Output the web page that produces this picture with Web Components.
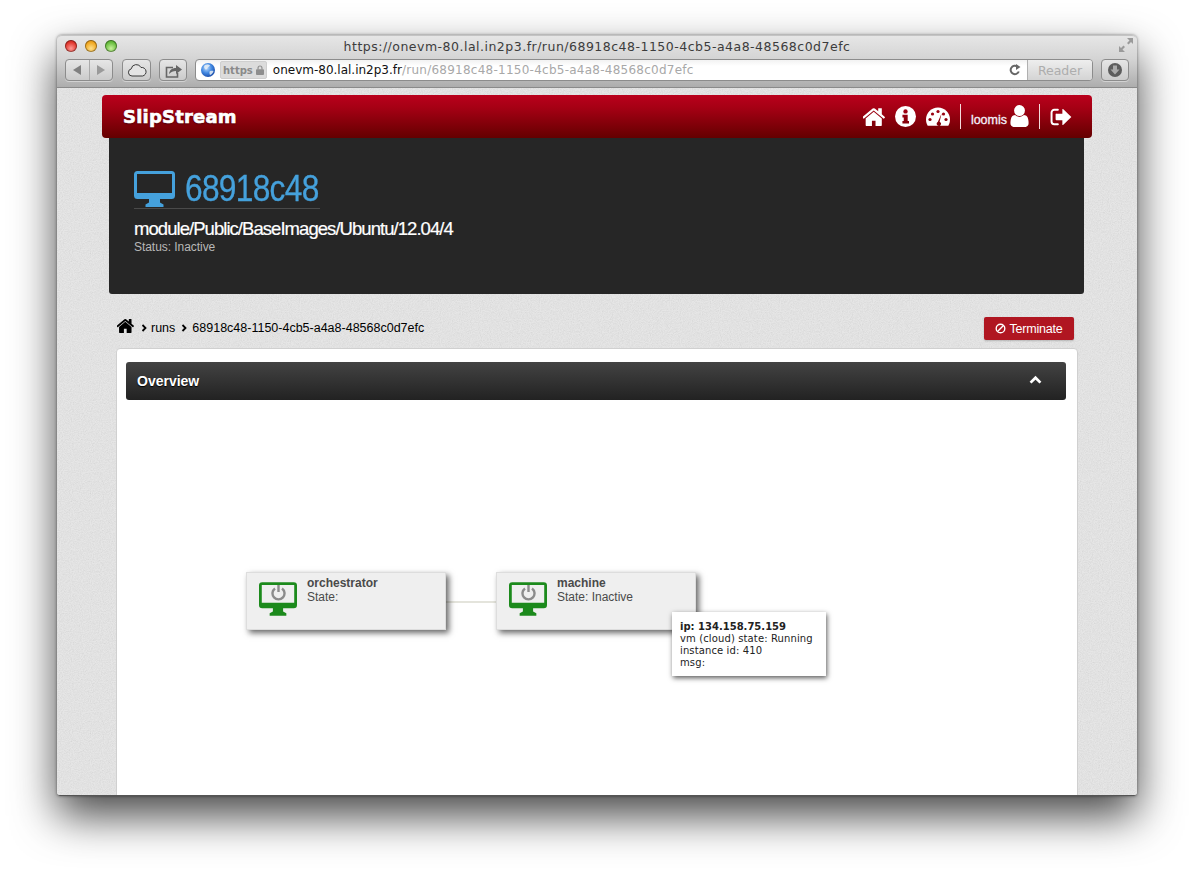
<!DOCTYPE html>
<html>
<head>
<meta charset="utf-8">
<title>SlipStream run</title>
<style>
  html, body { margin: 0; height: 874px; overflow: hidden; background: #fff; }
  body { box-sizing: border-box; padding: 35px 57px 0; font-family: "Liberation Sans", Arial, sans-serif; }
</style>
</head>
<body>
<browser-window>
  <site-nav></site-nav>
  <run-hero name="68918c48" module="module/Public/BaseImages/Ubuntu/12.04/4" status="Status: Inactive"></run-hero>
  <crumb-bar run="68918c48-1150-4cb5-a4a8-48568c0d7efc"></crumb-bar>
  <overview-panel heading="Overview">
    <run-diagram></run-diagram>
  </overview-panel>
</browser-window>

<script>
const ICONS = {
  home: `<svg viewBox="130 180 1570 1340"><path fill="currentColor" d="M1472 992v480q0 26-19 45t-45 19h-384v-384h-256v384h-384q-26 0-45-19t-19-45v-480q0-1 .5-3t.5-3l575-474 575 474q1 2 1 6zm223-69l-62 74q-8 9-21 11h-3q-13 0-21-7l-692-577-692 577q-12 8-24 7-13-2-21-11l-62-74q-8-10-7-23.5t11-21.5l719-599q32-26 76-26t76 26l244 204v-195q0-14 9-23t23-9h192q14 0 23 9t9 23v408l219 182q10 8 11 21.5t-7 23.5z"/></svg>`,
  info: `<svg viewBox="0 0 24 24"><mask id="m"><circle cx="12" cy="12" r="12" fill="#fff"/><circle cx="12" cy="6.200" r="2.500" fill="#000"/><path fill="#000" d="M8.500 10h6v7h1.500v3H8.500v-3H10v-4H8.500z"/></mask><rect width="24" height="24" fill="currentColor" mask="url(#m)"/></svg>`,
  dashboard: `<svg viewBox="0 0 24 19"><mask id="d"><path fill="#fff" d="M12 .500C5.400.500 0 5.900 0 12.500c0 2.300.6 4.400 1.700 6.200h20.600c1.100-1.800 1.700-3.900 1.700-6.200C24 5.900 18.600.500 12 .500z"/><g fill="#000"><circle cx="4" cy="12.500" r="1.600"/><circle cx="6.500" cy="7" r="1.600"/><circle cx="12" cy="4.500" r="1.600"/><circle cx="17.500" cy="7" r="1.600"/><circle cx="20" cy="12.500" r="1.600"/><path d="M15.600 6.500l-2 8.200a2.200 2.200 0 1 1-2.900 2.600c-.2-1 .3-2 1.100-2.400z"/></g></mask><rect width="24" height="19" fill="currentColor" mask="url(#d)"/></svg>`,
  user: `<svg viewBox="250 120 1290 1550"><path fill="currentColor" d="M1536 1399q0 109-62.500 187t-150.500 78h-854q-88 0-150.500-78t-62.500-187q0-85 8.500-160.500t31.500-152 58.500-131 94-89 134.500-34.500q131 128 313 128t313-128q76 0 134.500 34.500t94 89 58.500 131 31.500 152 8.500 160.500zm-256-887q0 159-112.500 271.500t-271.500 112.500-271.500-112.500-112.500-271.500 112.500-271.500 271.500-112.500 271.500 112.500 112.500 271.500z"/></svg>`,
  signout: `<svg viewBox="0 0 24 20"><path fill="none" stroke="currentColor" stroke-width="2.200" stroke-linecap="round" d="M8.500 2H4.500A3 3 0 0 0 1.500 5v10a3 3 0 0 0 3 3h4"/><path fill="currentColor" d="M7 6.500h6.500V1.500a.5.500 0 0 1 .8-.4L23.500 10l-9.200 8.900a.5.500 0 0 1-.8-.4v-5H7a1 1 0 0 1-1-1v-5.500a1 1 0 0 1 1-1z"/></svg>`,
  monitor: `<svg viewBox="0 0 41 36"><path fill="currentColor" fill-rule="evenodd" d="M3.500 0h34A3.500 3.500 0 0 1 41 3.500v21a3.500 3.500 0 0 1-3.500 3.500H26v3.500l3.500 2V36h-18v-2.500l3.500-2V28H3.500A3.500 3.500 0 0 1 0 24.500v-21A3.500 3.500 0 0 1 3.500 0zM3 3v19h35V3z"/></svg>`,
  chevronRight: `<svg viewBox="0 0 8 10"><path fill="none" stroke="currentColor" stroke-width="2.400" d="M2 1l4 4-4 4"/></svg>`,
  chevronUp: `<svg viewBox="0 0 14 10"><path fill="none" stroke="currentColor" stroke-width="3" d="M1.500 8.500L7 3l5.500 5.500"/></svg>`,
  ban: `<svg viewBox="0 0 12 12"><circle cx="6" cy="6" r="4.700" fill="none" stroke="currentColor" stroke-width="1.500"/><path stroke="currentColor" stroke-width="1.500" d="M2.800 9.200l6.400-6.400"/></svg>`,
  cloud: `<svg viewBox="0 0 20 14"><path fill="#e4e4e4" stroke="#3a3a3a" stroke-width="1" d="M5 13a3.600 3.600 0 0 1-.8-7.100A5.200 5.200 0 0 1 14 4.500a4.300 4.300 0 0 1 1.500 8.500z"/></svg>`,
  share: `<svg viewBox="0 0 17 15"><path fill="none" stroke="#666" stroke-width="1.600" d="M8 4.500H1.500v9.500h11V10"/><path fill="#666" d="M4 11c.5-4 3-6 7-6V2l6 4.500L11 11V8C8 8 6 9 4 11z"/></svg>`,
  reload: `<svg viewBox="0 0 12 12"><path fill="none" stroke="#666" stroke-width="2" d="M9.800 7.500A4.200 4.200 0 1 1 8.500 2.700"/><path fill="#666" d="M7 0l4.500 3L7 6z"/></svg>`,
  lock: `<svg viewBox="0 0 9 11"><path fill="none" stroke="#8e8e8e" stroke-width="1.300" d="M2.300 5V3.200a2.200 2.200 0 0 1 4.400 0V5"/><rect y="4.600" width="9" height="6.400" rx="1" fill="#8e8e8e"/></svg>`,
  download: `<svg viewBox="0 0 14 14"><circle cx="7" cy="7" r="7" fill="#5c5c5c"/><path fill="#aaa" d="M5 2.500h4v4h2.500L7 11.500 2.500 6.500H5z"/></svg>`,
  expand: `<svg viewBox="0 0 14 14"><path fill="#9a9a9a" d="M8 0h6v6l-2-2-2.500 2.500-1.500-1.500L10.500 2.500zM0 14V8l2 2 2.500-2.500 1.500 1.500L3.500 11.500 6 14z"/></svg>`,
  globe: `<svg viewBox="0 0 14 14"><defs><radialGradient id="g" cx=".4" cy=".35" r=".75"><stop offset="0" stop-color="#bcdcff"/><stop offset=".5" stop-color="#3f86e0"/><stop offset="1" stop-color="#123f9c"/></radialGradient></defs><circle cx="7" cy="7" r="7" fill="url(#g)"/><path fill="#e8eef5" opacity=".85" d="M4 2c2-1 4-.5 5 .5-.5 1.500-2 1-2.500 2.500S5 7 4 6 2.500 3 4 2zM9 8c1.500-.5 3-.5 3.500 0-.5 2-2 3.500-3.500 4-.5-1.500-1-3 0-4z"/></svg>`
}

class SsIcon extends HTMLElement {
  connectedCallback() {
    const w = this.getAttribute('w') || 16
    const h = this.getAttribute('h') || 16
    this.attachShadow({mode: 'open'}).innerHTML = `
      <style>
        :host { display: inline-flex; flex: none; width: ${w}px; height: ${h}px; }
        svg { width: 100%; height: 100%; display: block; }
      </style>
      ${ICONS[this.getAttribute('name')]}
    `
  }
}
customElements.define('ss-icon', SsIcon)

class BrowserWindow extends HTMLElement {
  connectedCallback() {
    const noise = "data:image/svg+xml," + encodeURIComponent(`<svg xmlns='http://www.w3.org/2000/svg' width='240' height='240'><filter id='n'><feTurbulence type='fractalNoise' baseFrequency='.9' numOctaves='2' stitchTiles='stitch'/><feColorMatrix values='0 0 0 0 .5 0 0 0 0 .5 0 0 0 0 .5 .35 .35 .35 0 -.42'/></filter><rect width='240' height='240' filter='url(#n)'/></svg>`)
    this.attachShadow({mode: 'open'}).innerHTML = `
      <style>
        :host {
          display: flex;
          flex-direction: column;
          width: 1080px;
          height: 761px;
          border-radius: 5px 5px 3px 3px;
          box-shadow: 0 20px 44px rgba(0,0,0,.72), 0 0 3px rgba(0,0,0,.5);
        }
        .page {
          flex: 1;
          min-height: 0;
          overflow: hidden;
          background: #e6e6e6 url("${noise}");
          border-radius: 0 0 3px 3px;
          border-bottom: 1px solid #555;
        }
      </style>
      <browser-toolbar></browser-toolbar>
      <div class="page"><slot></slot></div>
    `
  }
}
customElements.define('browser-window', BrowserWindow)

class BrowserToolbar extends HTMLElement {
  connectedCallback() {
    this.attachShadow({mode: 'open'}).innerHTML = `
      <style>
        :host {
          display: block;
          height: 51px;
          box-sizing: content-box;
          border-top: 1px solid #c4c4c4;
          border-bottom: 1px solid #8a8a8a;
          border-radius: 5px 5px 0 0;
          background: linear-gradient(#e6e6e6, #d4d4d4 45%, #adadad);
          font-family: "DejaVu Sans", sans-serif;
        }
        .title {
          height: 20px;
          margin-bottom: 3px;
          display: grid;
          grid-template-columns: 1fr auto 1fr;
          align-items: center;
          padding: 0 8px;
        }
        .lights { display: flex; gap: 8px; }
        .light { width: 12px; height: 12px; border-radius: 50%; box-shadow: inset 0 0 0 1px rgba(0,0,0,.35); }
        .red { background: radial-gradient(circle at 50% 70%, #ff9a94, #e0352c 60%, #a81c15); }
        .amber { background: radial-gradient(circle at 50% 70%, #ffe08a, #f0a61e 60%, #b9760f); }
        .green { background: radial-gradient(circle at 50% 70%, #c8f29c, #66bc3c 60%, #3c8a20); }
        .url-title { font-size: 12.500px; color: #3c3c3c; letter-spacing: .49px; white-space: nowrap; }
        .expand { justify-self: end; display: flex; margin: -2px -4px 0 0; }
        .controls { display: flex; align-items: stretch; height: 22px; padding: 0 8px; }
        .btn {
          box-sizing: border-box;
          display: flex;
          align-items: center;
          justify-content: center;
          border: 1px solid #8c8c8c;
          border-radius: 4px;
          background: linear-gradient(#e6e6e6, #cbcbcb);
          box-shadow: 0 1px 0 rgba(255,255,255,.4);
        }
        .nav { width: 48px; margin-right: 9px; }
        .nav span { flex: 1; height: 100%; display: flex; align-items: center; justify-content: center; }
        .nav span + span { border-left: 1px solid #aaa; }
        .tri { width: 0; height: 0; border-top: 5px solid transparent; border-bottom: 5px solid transparent; }
        .back { border-right: 8px solid #808080; }
        .fwd { border-left: 8px solid #9a9a9a; }
        .cloud { width: 29px; margin-right: 8px; }
        .share { width: 28px; margin-right: 8px; }
        .field {
          flex: 1;
          display: flex;
          align-items: center;
          border: 1px solid #8c8c8c;
          border-radius: 4px;
          background: linear-gradient(#f2f2f2, #fff 30%);
          font-size: 12px;
          padding-left: 5px;
          min-width: 0;
          margin-right: 8px;
        }
        .https {
          display: flex;
          align-items: center;
          gap: 3px;
          height: 16px;
          margin: 0 6px 0 5px;
          padding: 0 2px;
          background: #dcdcdc;
          border: 1px solid #cfcfcf;
          border-radius: 2px;
          color: #8a8a8a;
          font: bold 10px "DejaVu Sans", sans-serif;
        }
        .host { color: #111; white-space: nowrap; }
        .path { color: #a8a8a8; white-space: nowrap; flex: 1; letter-spacing: .25px; }
        .reader {
          align-self: stretch;
          width: 64px;
          margin-left: 6px;
          display: flex;
          align-items: center;
          justify-content: center;
          border-left: 1px solid #b0b0b0;
          border-radius: 0 3px 3px 0;
          background: linear-gradient(#eee, #d4d4d4);
          color: #adadad;
          font-size: 12.500px;
        }
        .dl { width: 28px; }
      </style>
      <div class="title">
        <div class="lights"><span class="light red"></span><span class="light amber"></span><span class="light green"></span></div>
        <div class="url-title">https://onevm-80.lal.in2p3.fr/run/68918c48-1150-4cb5-a4a8-48568c0d7efc</div>
        <div class="expand"><ss-icon name="expand" w="14" h="14"></ss-icon></div>
      </div>
      <div class="controls">
        <div class="btn nav"><span><i class="tri back"></i></span><span><i class="tri fwd"></i></span></div>
        <div class="btn cloud"><ss-icon name="cloud" w="20" h="14"></ss-icon></div>
        <div class="btn share"><ss-icon name="share" w="17" h="15"></ss-icon></div>
        <div class="field">
          <ss-icon name="globe" w="14" h="14"></ss-icon>
          <span class="https">https <ss-icon name="lock" w="8" h="10"></ss-icon></span>
          <span class="host">onevm-80.lal.in2p3.fr</span><span class="path">/run/68918c48-1150-4cb5-a4a8-48568c0d7efc</span>
          <ss-icon name="reload" w="12" h="12"></ss-icon>
          <div class="reader">Reader</div>
        </div>
        <div class="btn dl"><ss-icon name="download" w="14" h="14"></ss-icon></div>
      </div>
    `
  }
}
customElements.define('browser-toolbar', BrowserToolbar)

class SiteNav extends HTMLElement {
  connectedCallback() {
    this.attachShadow({mode: 'open'}).innerHTML = `
      <style>
        :host {
          display: flex;
          align-items: center;
          height: 43px;
          margin: 7px 45px 0;
          padding: 0 20px 0 21px;
          border-radius: 4px;
          background: linear-gradient(#ba001c, #a50014 30%, #640000);
          color: #fff;
        }
        .logo {
          font: bold 18px "DejaVu Sans", sans-serif;
          letter-spacing: .2px;
          -webkit-text-stroke: .6px #fff;
          text-shadow: 0 1px 2px rgba(0,0,0,.5);
          margin-right: auto;
        }
        .items { display: flex; align-items: center; }
        .sep { width: 1px; height: 25px; background: #f3dcdc; }
        .who { font-size: 12.500px; -webkit-text-stroke: .3px #f4f0fa; color: #f4f0fa; margin: 6px 3px 0 0; }
      </style>
      <div class="logo">SlipStream</div>
      <div class="items">
        <ss-icon name="home" w="22" h="19"></ss-icon>
        <ss-icon name="info" w="21" h="21" style="margin-left:10px"></ss-icon>
        <ss-icon name="dashboard" w="24" h="19" style="margin-left:10px"></ss-icon>
        <span class="sep" style="margin:0 10px"></span>
        <span class="who">loomis</span>
        <ss-icon name="user" w="19" h="22" style="margin:-2px 10px 0 0"></ss-icon>
        <span class="sep" style="margin-right:10px"></span>
        <ss-icon name="signout" w="22" h="18"></ss-icon>
      </div>
    `
  }
}
customElements.define('site-nav', SiteNav)

class RunHero extends HTMLElement {
  connectedCallback() {
    this.attachShadow({mode: 'open'}).innerHTML = `
      <style>
        :host {
          display: block;
          box-sizing: border-box;
          height: 156px;
          margin: 0 53px 0 52px;
          padding: 31px 25px 0;
          background: #262626;
          border-radius: 0 0 3px 3px;
        }
        .head {
          display: inline-flex;
          align-items: center;
          gap: 10px;
          width: 186px;
          height: 39px;
          border-bottom: 1px solid #4a4a4a;
          color: #45a1dc;
        }
        h1 {
          margin: 0;
          font-size: 36px;
          font-weight: normal;
          letter-spacing: -.8px;
          -webkit-text-stroke: .3px #45a1dc;
          white-space: nowrap;
          transform: scaleX(.88);
          transform-origin: left center;
        }
        .module { margin-top: 7px; font-size: 18.500px; line-height: 22px; letter-spacing: -.95px; -webkit-text-stroke: .2px #fff; color: #fff; }
        .status { margin-top: 1px; font-size: 12px; line-height: 13px; letter-spacing: -.05px; color: #b8b8b8; }
      </style>
      <div class="head"><ss-icon name="monitor" w="41" h="36"></ss-icon><h1>${this.getAttribute('name')}</h1></div>
      <div class="module">${this.getAttribute('module')}</div>
      <div class="status">${this.getAttribute('status')}</div>
    `
  }
}
customElements.define('run-hero', RunHero)

class CrumbBar extends HTMLElement {
  connectedCallback() {
    this.attachShadow({mode: 'open'}).innerHTML = `
      <style>
        :host {
          display: flex;
          align-items: center;
          height: 23px;
          margin: 23px 63px 8px 60px;
          color: #000;
          font-size: 12.500px;
        }
        .trail { display: flex; align-items: center; margin: -2px auto 0 0; }
        .term {
          display: flex;
          align-items: center;
          justify-content: center;
          gap: 3px;
          box-sizing: border-box;
          width: 90px;
          height: 23px;
          border-radius: 2px;
          background: #b01621;
          color: #fff;
          box-shadow: 0 1px 2px rgba(0,0,0,.2);
          letter-spacing: -.2px;
        }
      </style>
      <div class="trail">
        <ss-icon name="home" w="17" h="15" style="margin-top:-4px"></ss-icon>
        <ss-icon name="chevronRight" w="6" h="8" style="margin:0 4px 0 7px"></ss-icon>
        <span>runs</span>
        <ss-icon name="chevronRight" w="6" h="8" style="margin:0 5px 0 6px"></ss-icon>
        <span>${this.getAttribute('run')}</span>
      </div>
      <div class="term"><ss-icon name="ban" w="11" h="11"></ss-icon>Terminate</div>
    `
  }
}
customElements.define('crumb-bar', CrumbBar)

class OverviewPanel extends HTMLElement {
  connectedCallback() {
    this.attachShadow({mode: 'open'}).innerHTML = `
      <style>
        :host {
          display: block;
          box-sizing: border-box;
          width: 962px;
          height: 500px;
          margin-left: 59px;
          padding: 13px 11px 0 9px;
          background: #fff;
          border: 1px solid #d0d0d0;
          border-radius: 4px;
        }
        header {
          display: flex;
          align-items: center;
          justify-content: space-between;
          height: 38px;
          padding: 0 24px 0 11px;
          border-radius: 3px;
          background: linear-gradient(#434343, #222);
          color: #fff;
          font-size: 14px;
          font-weight: bold;
          text-shadow: 0 1px 1px #000;
        }
      </style>
      <header><span>${this.getAttribute('heading')}</span><ss-icon name="chevronUp" w="13" h="9" style="margin-top:-4px"></ss-icon></header>
      <slot></slot>
    `
  }
}
customElements.define('overview-panel', OverviewPanel)

class VmNode extends HTMLElement {
  connectedCallback() {
    this.attachShadow({mode: 'open'}).innerHTML = `
      <style>
        :host {
          position: absolute;
          display: flex;
          box-sizing: border-box;
          width: 200px;
          height: 58px;
          padding: 9px 0 0 12px;
          background: #efefef;
          border: 1px solid #ddd;
          box-shadow: 3px 3px 6px rgba(0,0,0,.6);
          font-size: 12px;
          line-height: 14px;
          color: #4a4a4a;
        }
        .icon { position: relative; width: 38px; height: 34px; color: #1c8a1c; margin-right: 10px; }
        .power { position: absolute; left: 12px; top: 2px; width: 15px; height: 17px; }
        b { display: block; margin-top: -6px; }
      </style>
      <div class="icon">
        <ss-icon name="monitor" w="38" h="34"></ss-icon>
        <svg class="power" viewBox="0 0 15 17"><path fill="none" stroke="#8c8c8c" stroke-width="2.400" d="M4 4.500a6 6 0 1 0 7 0"/><path stroke="#8c8c8c" stroke-width="2.400" d="M7.500 1v7"/></svg>
      </div>
      <div><b>${this.getAttribute('name')}</b>State:${this.getAttribute('state') ? ' ' + this.getAttribute('state') : ''}</div>
    `
  }
}
customElements.define('vm-node', VmNode)

class NodeTip extends HTMLElement {
  connectedCallback() {
    this.attachShadow({mode: 'open'}).innerHTML = `
      <style>
        :host {
          position: absolute;
          box-sizing: border-box;
          width: 154px;
          height: 64px;
          padding: 9px 8px;
          background: #fff;
          box-shadow: 1px 2px 5px rgba(0,0,0,.65);
          font: 10px/12px "DejaVu Sans", sans-serif;
          letter-spacing: .12px;
          color: #222;
          white-space: nowrap;
        }
      </style>
      <slot></slot>
    `
  }
}
customElements.define('node-tip', NodeTip)

class RunDiagram extends HTMLElement {
  connectedCallback() {
    this.attachShadow({mode: 'open'}).innerHTML = `
      <style>
        :host { display: block; position: relative; height: 390px; }
        .edge { position: absolute; left: 320px; top: 201px; width: 50px; height: 2px; background: #e4e4dc; }
        b { letter-spacing: 0; }
      </style>
      <div class="edge"></div>
      <vm-node name="orchestrator" style="left:120px;top:172px"></vm-node>
      <vm-node name="machine" state="Inactive" style="left:370px;top:172px"></vm-node>
      <node-tip style="left:546px;top:212px"><b>ip: 134.158.75.159</b><br>vm (cloud) state: Running<br>instance id: 410<br>msg:</node-tip>
    `
  }
}
customElements.define('run-diagram', RunDiagram)
</script>
</body>
</html>
